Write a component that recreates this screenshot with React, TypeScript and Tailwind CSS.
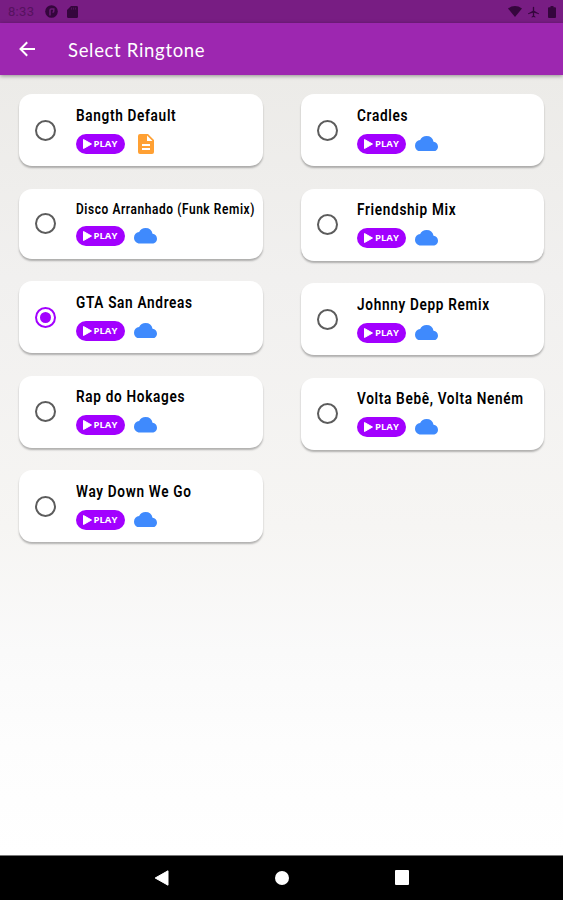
import React, { useState } from 'react';
import clsx from 'clsx';

type Ringtone = {
  id: number;
  name: string;
  source: 'local' | 'cloud';
  compact?: boolean;
};

const leftColumn: Ringtone[] = [
  { id: 1, name: 'Bangth Default', source: 'local' },
  { id: 2, name: 'Disco Arranhado (Funk Remix)', source: 'cloud', compact: true },
  { id: 3, name: 'GTA San Andreas', source: 'cloud' },
  { id: 4, name: 'Rap do Hokages', source: 'cloud' },
  { id: 5, name: 'Way Down We Go', source: 'cloud' },
];

const rightColumn: Ringtone[] = [
  { id: 6, name: 'Cradles', source: 'cloud' },
  { id: 7, name: 'Friendship Mix', source: 'cloud' },
  { id: 8, name: 'Johnny Depp Remix', source: 'cloud' },
  { id: 9, name: 'Volta Bebê, Volta Neném', source: 'cloud' },
];

const StatusBar: React.FC = () => (
  <div className="flex h-[23px] shrink-0 items-center justify-between bg-[#781d83] pr-[7px] pl-2 text-[#35063d]">
    <div className="flex items-center">
      <span className="w-[37px] font-['Roboto',sans-serif] text-[13px] leading-none tracking-[0.3px] text-[#56125f]">8:33</span>
      <svg className="h-[13px] w-[13px]" viewBox="0 0 13 13">
        <circle cx="6.5" cy="6.5" r="6.3" fill="currentColor" />
        <path d="M5 10.500V5.200Q5 4 6.200 4h2.600v2q0 1.200-1.300 1.200" fill="none" stroke="#6b1a76" strokeWidth="1.5" />
      </svg>
      <svg className="ml-[9px] h-3 w-[11px]" viewBox="0 0 11 12">
        <path d="M4 0h5.6Q11 0 11 1.3v9.4Q11 12 9.6 12H1.4Q0 12 0 10.7V4z" fill="currentColor" />
        <path d="M4.5 1.6v2M6.5 1.6v2M8.5 1.6v2" stroke="#5b1465" strokeWidth=".7" />
      </svg>
    </div>
    <div className="flex items-center">
      <svg className="h-[11px] w-[14px]" viewBox="0 0 14 11">
        <path d="M0 2.5Q7-2.3 14 2.5L7 11z" fill="currentColor" />
      </svg>
      <svg className="mr-px ml-[6px] h-3 w-[11px]" viewBox="2 2 20 20">
        <path d="M22 16v-1.500l-8.800-5V3.500a1.200 1.200 0 0 0-2.400 0v6L2 14.500V16l8.800-2.500V19L8.500 20.500V22l3.500-1 3.500 1v-1.500L13.200 19v-5.500z" fill="currentColor" />
      </svg>
      <svg className="ml-[8px] h-3 w-2" viewBox="0 0 8 12">
        <path d="M2.500 0h3v1.200H7q1 0 1 1V11q0 1-1 1H1q-1 0-1-1V2.200q0-1 1-1h1.500z" fill="currentColor" />
      </svg>
    </div>
  </div>
);

const AppBar: React.FC = () => (
  <header className="z-10 flex h-[52px] shrink-0 items-center bg-[#9d27b0] pl-[19px] text-white shadow-[0_1px_4px_rgba(0,0,0,0.4)]">
    <svg className="h-4 w-4" viewBox="0 0 16 16" fill="none" stroke="currentColor" strokeWidth="2">
      <path d="M8.200 1.200 1.500 8l6.700 6.800M1.500 8H16" />
    </svg>
    <h1 className="mt-[2px] ml-[33px] whitespace-nowrap font-['Lato',sans-serif] text-[18.500px] leading-none font-normal tracking-[0.680px]">
      Select Ringtone
    </h1>
  </header>
);

const Radio: React.FC<{ checked: boolean }> = ({ checked }) => (
  <span
    className={clsx(
      'flex h-[21px] w-[21px] items-center justify-center rounded-full border-2',
      checked ? 'border-[#a200ff]' : 'border-[#5c5c5c]'
    )}
  >
    {checked && <span className="h-[11px] w-[11px] rounded-full bg-[#a200ff]" />}
  </span>
);

const SourceIcon: React.FC<{ source: Ringtone['source'] }> = ({ source }) => {
  if (source === 'local') {
    return (
      <svg className="ml-[13px] h-5 w-4" viewBox="4 2 16 20">
        <path
          d="M14 2H6a2 2 0 0 0-2 2v16a2 2 0 0 0 2 2h12a2 2 0 0 0 2-2V8zm2 16H8v-2h8zm0-4H8v-2h8zm-3-5V3.500L18.500 9z"
          fill="#ffa033"
        />
      </svg>
    );
  }

  return (
    <svg className="ml-[9px] h-[15.500px] w-[23px]" viewBox="0 4 24 16" preserveAspectRatio="none">
      <path
        d="M19.350 10.040A7.490 7.490 0 0 0 12 4C9.110 4 6.600 5.640 5.350 8.040A5.994 5.994 0 0 0 0 14c0 3.310 2.690 6 6 6h13c2.760 0 5-2.240 5-5 0-2.640-2.050-4.780-4.650-4.960z"
        fill="#3f8afd"
      />
    </svg>
  );
};

type CardProps = {
  ringtone: Ringtone;
  checked: boolean;
  onSelect: (id: number) => void;
};

const RingtoneCard: React.FC<CardProps> = ({ ringtone, checked, onSelect }) => (
  <div
    className={clsx(
      'flex cursor-pointer items-center rounded-[13px] bg-white pl-4 shadow-[0_2px_2px_rgba(0,0,0,0.28)]',
      ringtone.compact ? 'h-[70px]' : 'h-[72px]'
    )}
    onClick={() => onSelect(ringtone.id)}
  >
    <Radio checked={checked} />
    <div className="ml-[19.500px]">
      <p
        className={clsx(
          "w-[180px] origin-left scale-x-[0.85] whitespace-nowrap font-['Roboto',sans-serif] font-semibold text-black",
          ringtone.compact ? 'text-[14px] leading-[16px] tracking-[0.700px]' : 'text-[16px] leading-[18px] tracking-[0.800px]'
        )}
      >
        {ringtone.name}
      </p>
      <div className="mt-[9px] flex h-5 items-center">
        <button className="flex h-5 w-[49px] items-center rounded-full bg-[#a200ff] pl-[7px] text-white">
          <svg className="h-[10px] w-[9px]" viewBox="0 0 9 10">
            <path d="M.5.500 8.500 5l-8 4.500z" fill="currentColor" stroke="currentColor" strokeLinejoin="round" />
          </svg>
          <span className="ml-[2px] font-['Open_Sans',sans-serif] text-[9.500px] leading-none font-bold">PLAY</span>
        </button>
        <SourceIcon source={ringtone.source} />
      </div>
    </div>
  </div>
);

const NavigationBar: React.FC = () => (
  <nav className="flex h-[45px] shrink-0 items-center justify-between border-t border-[#777] bg-black pr-[154px] pb-px pl-[154px] text-white">
    <svg className="h-4 w-[15px]" viewBox="0 0 15 16">
      <path d="M14 .800v14.400L1.200 8z" fill="currentColor" stroke="currentColor" strokeLinejoin="round" />
    </svg>
    <span className="h-[14px] w-[14px] rounded-full bg-white" />
    <span className="h-[15px] w-[14px] rounded-[1px] bg-white" />
  </nav>
);

export default function App() {
  const [selectedId, setSelectedId] = useState(3);

  return (
    <div className="flex h-[900px] w-[563px] flex-col overflow-hidden">
      <StatusBar />
      <AppBar />
      <main className="flex flex-1 items-start gap-[38px] bg-[linear-gradient(to_bottom,#ecebe8,#f1f0ef_26%,#f6f5f3_58%,#fafafa_74%,#fdfdfd_86%,#fff)] pt-[19px] pr-[19px] pl-[19px]">
        {[leftColumn, rightColumn].map((column, index) => (
          <div key={index} className="flex flex-1 flex-col gap-[22.500px]">
            {column.map((ringtone) => (
              <RingtoneCard
                key={ringtone.id}
                ringtone={ringtone}
                checked={ringtone.id === selectedId}
                onSelect={setSelectedId}
              />
            ))}
          </div>
        ))}
      </main>
      <NavigationBar />
    </div>
  );
}
